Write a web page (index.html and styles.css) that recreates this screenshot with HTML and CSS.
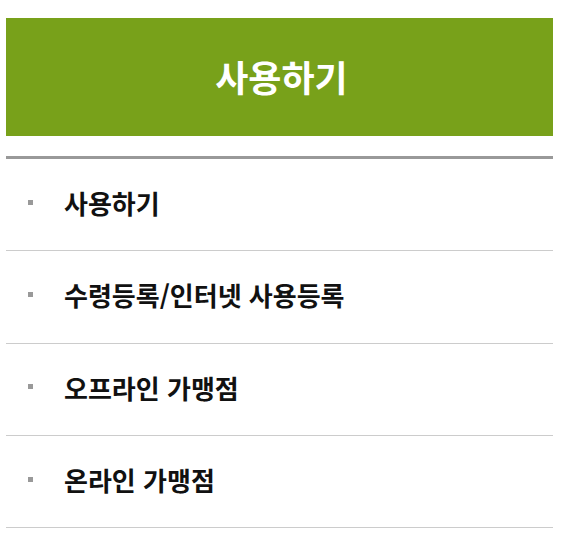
FILE: index.html
```html
<!DOCTYPE html>
<html lang="ko">
<head>
    <meta charset="UTF-8">
    <meta name="viewport" content="width=device-width, initial-scale=1.0">
    <title>사용하기</title>
    <link rel="stylesheet" href="styles.css">
</head>
<body>
    <div class="wrap">
        <h1 class="title">사용하기</h1>
        <ul class="menu">
            <li><a href="#">사용하기</a></li>
            <li><a href="#">수령등록/인터넷 사용등록</a></li>
            <li><a href="#">오프라인 가맹점</a></li>
            <li><a href="#">온라인 가맹점</a></li>
        </ul>
    </div>
</body>
</html>
```

FILE: styles.css
```css
body {
    margin: 0;
    background: #fff;
    font-family: "Noto Sans CJK KR", "Noto Sans", sans-serif;
}

.wrap {
    width: 547px;
    padding: 18px 0 0 6px;
}

.title {
    margin: 0;
    height: 118px;
    display: flex;
    align-items: center;
    justify-content: center;
    background-color: #78a11a;
    color: #fff;
    font-size: 36px;
    font-weight: bold;
    padding-bottom: 2px;
    padding-left: 4px;
    box-sizing: border-box;
}

.menu {
    list-style: none;
    margin: 20px 0 0;
    padding: 0;
    border-top: 3px solid #999;
}

.menu li {
    border-bottom: 1px solid #ccc;
}

.menu a {
    display: flex;
    align-items: center;
    height: 91.3px;
    box-sizing: border-box;
    padding: 0 0 4px 22px;
    color: #111;
    text-decoration: none;
    font-size: 26px;
    font-weight: bold;
}

.menu a:before {
    content: "";
    width: 5px;
    height: 5px;
    margin-right: 31px;
    margin-top: -1px;
    background-color: #999;
}
```
